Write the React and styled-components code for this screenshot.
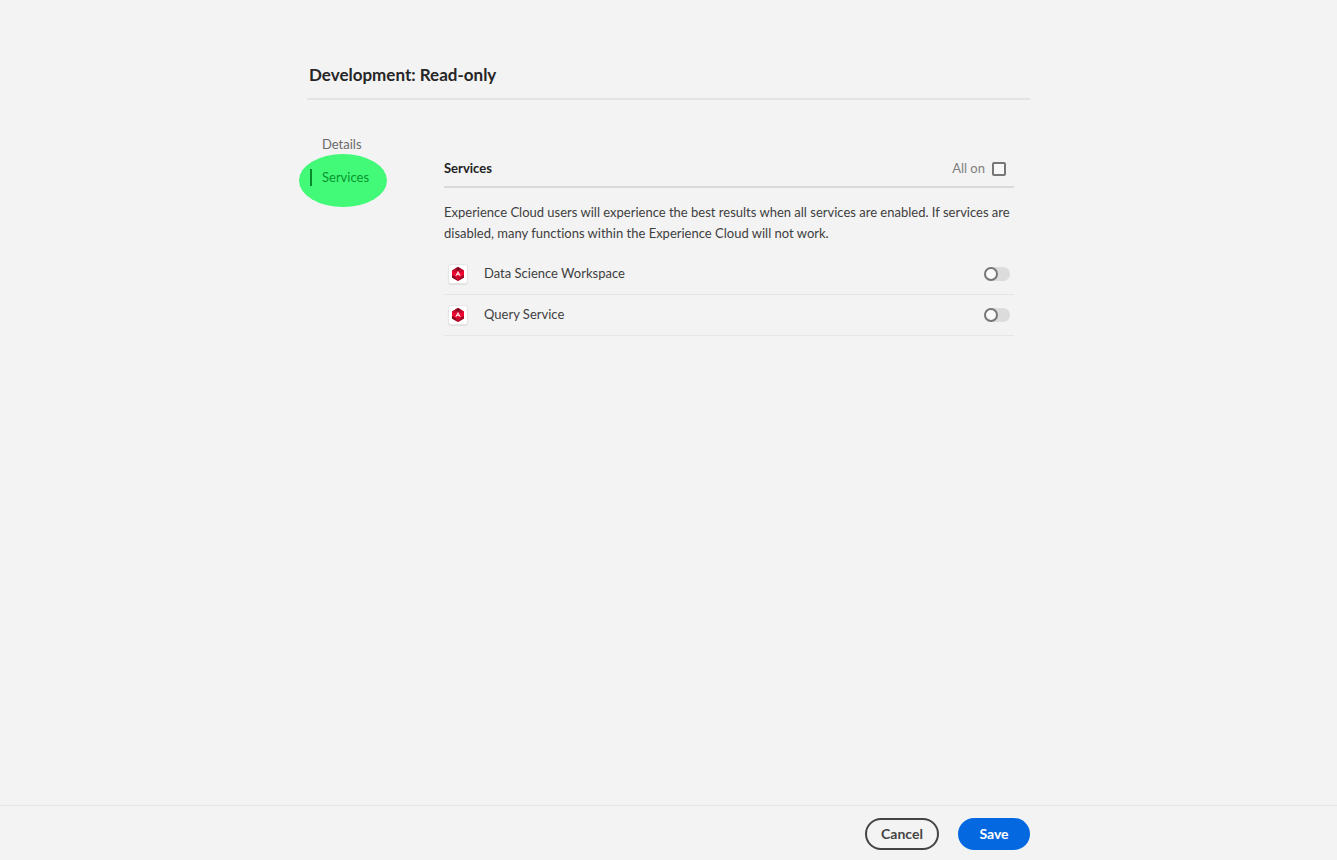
import React from "react";
import styled, { createGlobalStyle } from "styled-components";

const GlobalStyle = createGlobalStyle`
  *, *::before, *::after { box-sizing: border-box; }
  body {
    margin: 0;
    background: #f3f3f3;
    color: #3e3e3e;
    font-family: Lato, "Open Sans", sans-serif;
    font-size: 13px;
    line-height: 21px;
    font-variant-ligatures: none;
  }
`;

const Page = styled.div`
  min-height: 100vh;
  display: flex;
  flex-direction: column;
`;

const Container = styled.div`
  width: 100%;
  max-width: 723px;
  margin: 0 auto;
`;

const Main = styled(Container).attrs({ as: "main" })`
  flex: 1;
  padding-top: 64px;
`;

const Title = styled.h1`
  margin: 0;
  padding: 0 2px 12px;
  border-bottom: 2px solid #e4e4e4;
  color: #262626;
  font-size: 17px;
  line-height: 22px;
  font-weight: 700;
`;

const Columns = styled.div`
  display: flex;
  padding: 28px 16px 0 0;
`;

const Nav = styled.nav`
  flex: 0 0 137px;
  display: flex;
  flex-direction: column;
  align-items: flex-start;
  padding-left: 3px;
`;

const NavLink = styled.a`
  position: relative;
  display: flex;
  align-items: center;
  height: 33px;
  color: ${(p) => (p.$active ? "#07962f" : "#6a6a6a")};
  text-decoration: none;

  &::before {
    content: "";
    width: 2px;
    height: 17px;
    margin-right: 10px;
    background: ${(p) => (p.$active ? "#078a2b" : "transparent")};
  }
`;

const Highlight = styled.span`
  position: absolute;
  z-index: -1;
  top: -7px;
  left: -11px;
  width: 88px;
  height: 53px;
  border-radius: 50%;
  background: #42fa78;
`;

const Panel = styled.section`
  flex: 1;
  min-width: 0;
  padding-top: 30px;
`;

const PanelHeader = styled.header`
  display: flex;
  justify-content: space-between;
  align-items: center;
  padding: 0 8px 7px 0;
  border-bottom: 2px solid #d9d9d9;
`;

const PanelTitle = styled.h2`
  margin: 0;
  color: #222;
  font-size: 13px;
  line-height: 21px;
  font-weight: 700;
`;

const AllOn = styled.label`
  display: flex;
  align-items: center;
  gap: 7px;
  color: #808080;
`;

const Checkbox = styled.input.attrs({ type: "checkbox" })`
  appearance: none;
  width: 14px;
  height: 14px;
  margin: 0;
  border: 2px solid #777;
  border-radius: 2px;
  background: #f8f8f8;

  &:checked { background: #777; }
`;

const Description = styled.p`
  margin: 14px 0 10px;
`;

const ServiceList = styled.ul`
  margin: 0;
  padding: 0;
  list-style: none;
`;

const ServiceRow = styled.li`
  display: flex;
  align-items: center;
  height: 41px;
  padding: 0 4px;
  border-bottom: 1px solid #e6e6e6;
`;

const ServiceLabel = styled.label`
  flex: 1;
  margin-left: 16px;
  padding-bottom: 2px;
`;

const IconTile = styled.span`
  display: flex;
  align-items: center;
  justify-content: center;
  width: 20px;
  height: 20px;
  border: 1px solid #e6e6e6;
  border-radius: 3px;
  background: #fff;
  box-shadow: 0 1px 1px #00000014;
`;

const Switch = styled.input.attrs({ type: "checkbox", role: "switch" })`
  appearance: none;
  display: flex;
  width: 26px;
  height: 14px;
  margin: 0;
  border-radius: 7px;
  background: #dcdcdc;

  &::before {
    content: "";
    width: 14px;
    height: 14px;
    border: 2px solid #777;
    border-radius: 50%;
    background: #fafafa;
  }

  &:checked { justify-content: flex-end; }
`;

const Footer = styled.footer`
  border-top: 1px solid #e6e6e6;
  padding: 12px 0 10px;
`;

const Actions = styled(Container)`
  display: flex;
  justify-content: flex-end;
  gap: 19px;
`;

const Button = styled.button`
  min-width: ${(p) => (p.$primary ? 72 : 74)}px;
  height: 32px;
  padding: 0 12px;
  border: 2px solid ${(p) => (p.$primary ? "#0469e0" : "#444")};
  border-radius: 16px;
  background: ${(p) => (p.$primary ? "#0469e0" : "transparent")};
  color: ${(p) => (p.$primary ? "#fff" : "#444")};
  font: 700 14px/20px Lato, "Open Sans", sans-serif;
`;

function ServiceIcon() {
  return (
    <IconTile>
      <svg width="14" height="14" viewBox="0 0 14 14" aria-hidden="true">
        <path d="M7 0 13 3.5v7L7 14 1 10.5v-7Z" fill="#f00630" />
        <path d="M7 0 13 3.5 9.5 5.5 7 3.5 4.5 5.5 1 3.5Z" fill="#c40c2d" />
        <path d="M7 0 10 1.8 7 4 4 1.8Z" fill="#850b20" />
        <path d="M1 8 4 9.4 7 14 1 10.5Z" fill="#850b20" />
        <path d="M13 8 10 9.4 7 14 13 10.5Z" fill="#9c0b25" />
        <path d="M4 9.5h6L7 14Z" fill="#c60a2b" />
        <path d="M7 4 9.8 9 7 7.8 4.2 9Z" fill="#fff" />
        <path d="M7 5.8v2" stroke="#e85b72" strokeWidth=".7" />
      </svg>
    </IconTile>
  );
}

const services = [
  { id: "data-science", name: "Data Science Workspace" },
  { id: "query", name: "Query Service" },
];

export default function App() {
  return (
    <Page>
      <GlobalStyle />
      <Main>
        <Title>Development: Read-only</Title>
        <Columns>
          <Nav>
            <NavLink href="#details">Details</NavLink>
            <NavLink href="#services" $active aria-current="page">
              <Highlight />
              Services
            </NavLink>
          </Nav>
          <Panel id="services">
            <PanelHeader>
              <PanelTitle>Services</PanelTitle>
              <AllOn>
                All on
                <Checkbox />
              </AllOn>
            </PanelHeader>
            <Description>
              Experience Cloud users will experience the best results when all services are
              enabled. If services are disabled, many functions within the Experience Cloud will
              not work.
            </Description>
            <ServiceList>
              {services.map(({ id, name }) => (
                <ServiceRow key={id}>
                  <ServiceIcon />
                  <ServiceLabel htmlFor={id}>{name}</ServiceLabel>
                  <Switch id={id} />
                </ServiceRow>
              ))}
            </ServiceList>
          </Panel>
        </Columns>
      </Main>
      <Footer>
        <Actions>
          <Button type="button">Cancel</Button>
          <Button type="button" $primary>Save</Button>
        </Actions>
      </Footer>
    </Page>
  );
}
